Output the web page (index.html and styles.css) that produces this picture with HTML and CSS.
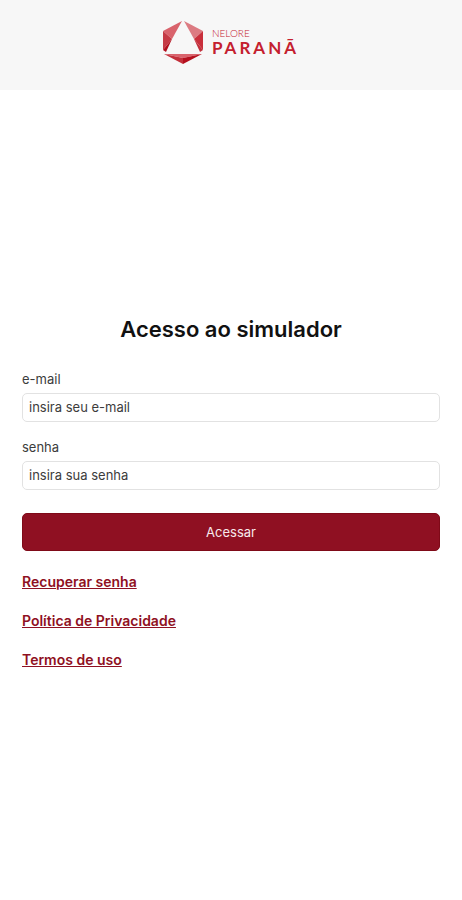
FILE: index.html
```html
<!DOCTYPE html>
<html lang="pt-BR">
<head>
    <meta charset="UTF-8">
    <meta name="viewport" content="width=device-width, initial-scale=1.0">
    <title>Nelore Paranã</title>
    <link rel="stylesheet" href="styles.css">
</head>
<body>
    <header class="header">
        <div class="logo">
            <svg class="logo-mark" viewBox="0 0 40 46" aria-hidden="true">
                <path fill="#d9636c" d="M19 2L0 12L9 20Z"/>
                <path fill="#c53a45" d="M0 12L9 20L0 31Z"/>
                <path fill="#b00d1b" d="M9 20L0 31L3 33Z"/>
                <path fill="#dc7b82" d="M21 2L40 12L31 20Z"/>
                <path fill="#c92f3b" d="M40 12L31 20L40 31Z"/>
                <path fill="#c2303b" d="M31 20L40 31L37 33Z"/>
                <path fill="#d9636c" d="M1 35H39L20 39Z"/>
                <path fill="#c3303b" d="M1 35L20 39V45Z"/>
                <path fill="#b5101e" d="M39 35L20 39V45Z"/>
            </svg>
            <div class="logo-text">
                <span class="logo-small">NELORE</span>
                <span class="logo-name">PARANÃ</span>
            </div>
        </div>
    </header>

    <main class="content">
        <h1>Acesso ao simulador</h1>
        <form class="login-form">
            <div class="field">
                <label for="email">e-mail</label>
                <input type="email" id="email" placeholder="insira seu e-mail">
            </div>
            <div class="field">
                <label for="senha">senha</label>
                <input type="password" id="senha" placeholder="insira sua senha">
            </div>
            <button type="submit">Acessar</button>
        </form>
        <nav class="links">
            <a href="#recuperar">Recuperar senha</a>
            <a href="#privacidade">Política de Privacidade</a>
            <a href="#termos">Termos de uso</a>
        </nav>
    </main>
</body>
</html>
```
FILE: styles.css
```css
* {
    box-sizing: border-box;
}
body {
    font-family: Inter, "Liberation Sans", sans-serif;
    font-size: 13px;
    line-height: 20px;
    display: flex;
    flex-direction: column;
    min-height: 100vh;
    margin: 0;
    background-color: #ffffff;
    color: #3c3c3c;
}
.header {
    display: flex;
    justify-content: center;
    padding: 19px 0 25px;
    background-color: #f7f7f7;
}
.logo {
    display: flex;
    align-items: center;
    gap: 9px;
}
.logo-mark {
    width: 40px;
    height: 46px;
}
.logo-text {
    display: flex;
    flex-direction: column;
    padding-top: 2px;
    font-family: Lato, sans-serif;
    color: #c4202e;
}
.logo-small {
    font-size: 10px;
    font-weight: 300;
    line-height: 10px;
}
.logo-name {
    font-size: 17px;
    font-weight: 700;
    line-height: 20px;
    letter-spacing: 3px;
}
.content {
    flex: 1;
    display: flex;
    flex-direction: column;
    justify-content: center;
    padding: 0 22px 8px;
}
h1 {
    margin: 0 0 24px;
    font-size: 22px;
    font-weight: 600;
    line-height: 32px;
    text-align: center;
    color: #111111;
}
.login-form {
    display: flex;
    flex-direction: column;
}
.field {
    display: flex;
    flex-direction: column;
    gap: 4px;
    margin-bottom: 15px;
}
input {
    width: 100%;
    height: 29px;
    padding: 0 6px;
    border: 1px solid #e2e2e2;
    border-radius: 5px;
    background-color: #ffffff;
    font: inherit;
    color: inherit;
}
input::placeholder {
    color: #3c3c3c;
    opacity: 1;
}
button {
    width: 100%;
    height: 38px;
    margin-top: 8px;
    border: 1px solid #7f0a18;
    border-radius: 5px;
    background-color: #8f1022;
    color: #f7e9eb;
    font: inherit;
    cursor: pointer;
}
.links {
    display: flex;
    flex-direction: column;
    align-items: flex-start;
    gap: 19px;
    margin-top: 21px;
}
.links a {
    font-size: 14px;
    font-weight: 600;
    color: #8f1022;
}
```
